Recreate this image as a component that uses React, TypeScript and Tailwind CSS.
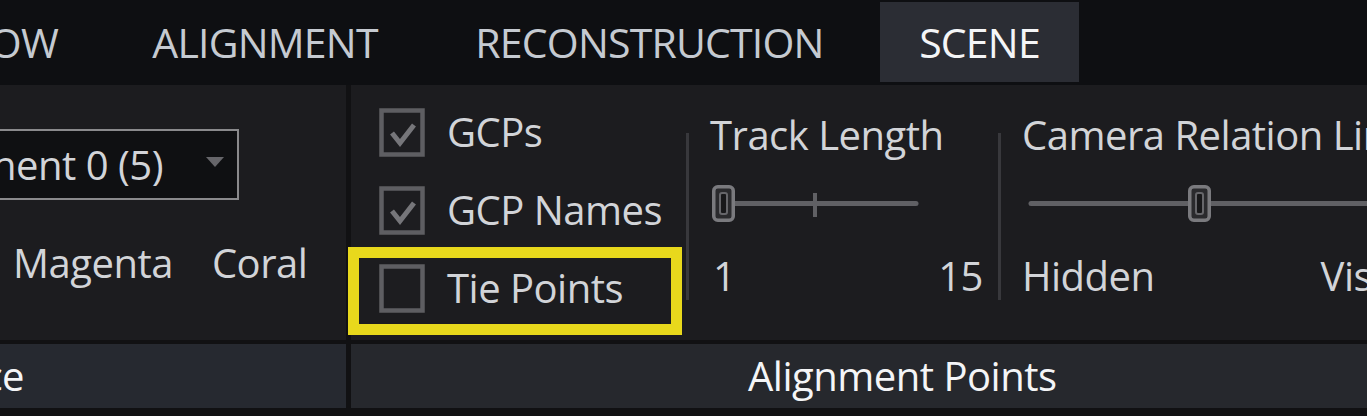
import React from "react";

const Check = ({ checked }: { checked: boolean }) => (
  <svg width="46" height="49" viewBox="0 0 46 49">
    <rect x="2.5" y="2.5" width="41" height="44" fill="#1d1d20" stroke="#5e5e62" strokeWidth="4.5" />
    {checked && (
      <polyline points="13,25 21,35 35,17" fill="none" stroke="#76767a" strokeWidth="5" strokeLinejoin="miter" />
    )}
  </svg>
);

const Slider = ({ width, trackFrom, trackTo, handleX, tickX }: { width: number; trackFrom: number; trackTo: number; handleX: number; tickX?: number }) => (
  <svg width={width} height="37" viewBox={`0 0 ${width} 37`} className="block overflow-visible">
    <line x1={trackFrom} y1="18.5" x2={trackTo} y2="18.5" stroke="#606064" strokeWidth="5" strokeLinecap="round" />
    {tickX !== undefined && <rect x={tickX - 2} y="8" width="4" height="24" fill="#606064" />}
    <rect x={handleX + 1.75} y="1.75" width="19.5" height="33.5" rx="4" fill="#2a2a2d" stroke="#7a7a7e" strokeWidth="3.5" />
    <rect x={handleX + 8} y="8" width="7" height="21" rx="2" fill="#18181a" stroke="#66666a" strokeWidth="2" />
  </svg>
);

export default function App() {
  const tab = "text-[41px] tracking-[-0.8px] leading-none text-[#c5cad1] whitespace-nowrap";
  const txt = "text-[40px] tracking-[-0.5px] leading-none text-[#d2d4d8] whitespace-nowrap";
  return (
    <div className="relative w-[1367px] h-[416px] overflow-hidden bg-[#0e0f12] flex flex-col font-['Open_Sans',sans-serif]">
      {/* Tabs */}
      <div className="h-[85px] flex items-stretch shrink-0">
        <div className={`w-[98px] flex justify-end items-center pr-[40px] overflow-hidden ${tab}`}>WORKFLOW</div>
        <div className={`ml-[12px] w-[310px] flex justify-center items-center ${tab}`}>ALIGNMENT</div>
        <div className={`ml-[14px] w-[431px] flex justify-center items-center ${tab}`}>RECONSTRUCTION</div>
        <div className={`ml-[15px] w-[199px] mt-[2px] h-[80px] bg-[#2b2d34] flex justify-center items-center ${tab} text-[#f4f5f7] font-medium`}>SCENE</div>
      </div>

      {/* Ribbon */}
      <div className="h-[255px] flex shrink-0">
        <div className="w-[346px] bg-[#1c1c1f] flex flex-col overflow-hidden">
          <div className="mt-[44px] ml-[-200px] w-[439px] h-[71px] border-2 border-[#8a8a8c] bg-[#0f1012] flex items-center justify-end shrink-0">
            <span className={txt}>Component 0 (5)</span>
            <svg width="20" height="12" viewBox="0 0 20 12" className="ml-[42px] mr-[12px] mb-[6px]">
              <polygon points="1,1 19,1 10,11" fill="#66666a" />
            </svg>
          </div>
          <div className="mt-[43px] flex items-center">
            <span className={`ml-[13px] ${txt}`}>Magenta</span>
            <span className={`ml-[39px] ${txt}`}>Coral</span>
          </div>
        </div>
        <div className="w-[5px] bg-[#111113]" />
        <div className="flex-1 bg-[#1c1c1f] flex items-start overflow-hidden">
          {/* checkboxes */}
          <div className="w-[335px] shrink-0 pl-[28px] pt-[8px] flex flex-col">
            {[
              ["GCPs", true],
              ["GCP Names", true],
              ["Tie Points", false],
            ].map(([label, checked]) => (
              <div key={label as string} className="h-[78px] flex items-center gap-[22px]">
                <Check checked={checked as boolean} />
                <span className={txt}>{label as string}</span>
              </div>
            ))}
          </div>
          <div className="w-[3px] mt-[48px] h-[167px] bg-[#38383c] shrink-0" />
          {/* Track length */}
          <div className="w-[309px] shrink-0 pl-[21px] pr-[15px] flex flex-col">
            <span className={`mt-[30px] ${txt}`}>Track Length</span>
            <div className="mt-[30px]">
              <Slider width={210} trackFrom={25} trackTo={206} handleX={2} tickX={105} />
            </div>
            <div className={`mt-[34px] flex justify-between pl-[3px] ${txt}`}>
              <span>1</span>
              <span>15</span>
            </div>
          </div>
          <div className="w-[3px] mt-[48px] h-[167px] bg-[#38383c] shrink-0" />
          {/* Camera relation lines */}
          <div className="w-[420px] shrink-0 pl-[21px] flex flex-col">
            <span className={`mt-[30px] ${txt}`}>Camera Relation Lines</span>
            <div className="mt-[30px]">
              <Slider width={398} trackFrom={9} trackTo={395} handleX={166} />
            </div>
            <div className={`mt-[34px] flex ${txt}`}>
              <span>Hidden</span>
              <span className="ml-[166px]">Visible</span>
            </div>
          </div>
        </div>
      </div>

      <div className="h-[4px] bg-[#111113] shrink-0" />

      {/* Labels */}
      <div className="h-[64px] flex shrink-0">
        <div className="w-[346px] bg-[#262930] flex items-center justify-end pr-[322px] overflow-hidden">
          <span className="text-[40px] tracking-[-0.5px] leading-none font-medium text-[#f4f5f7] whitespace-nowrap">Appearance</span>
        </div>
        <div className="w-[5px] bg-[#111113]" />
        <div className="flex-1 bg-[#26282d] flex items-center pl-[397px]">
          <span className="text-[40px] tracking-[-0.5px] leading-none font-medium text-[#f4f5f7] whitespace-nowrap">Alignment Points</span>
        </div>
      </div>
      <div className="flex-1 bg-[#111113]" />

      {/* Yellow highlight annotation */}
      <div className="absolute left-[348px] top-[247px] w-[334px] h-[88px] border-[11px] border-[#e8d81c] pointer-events-none" />
    </div>
  );
}
